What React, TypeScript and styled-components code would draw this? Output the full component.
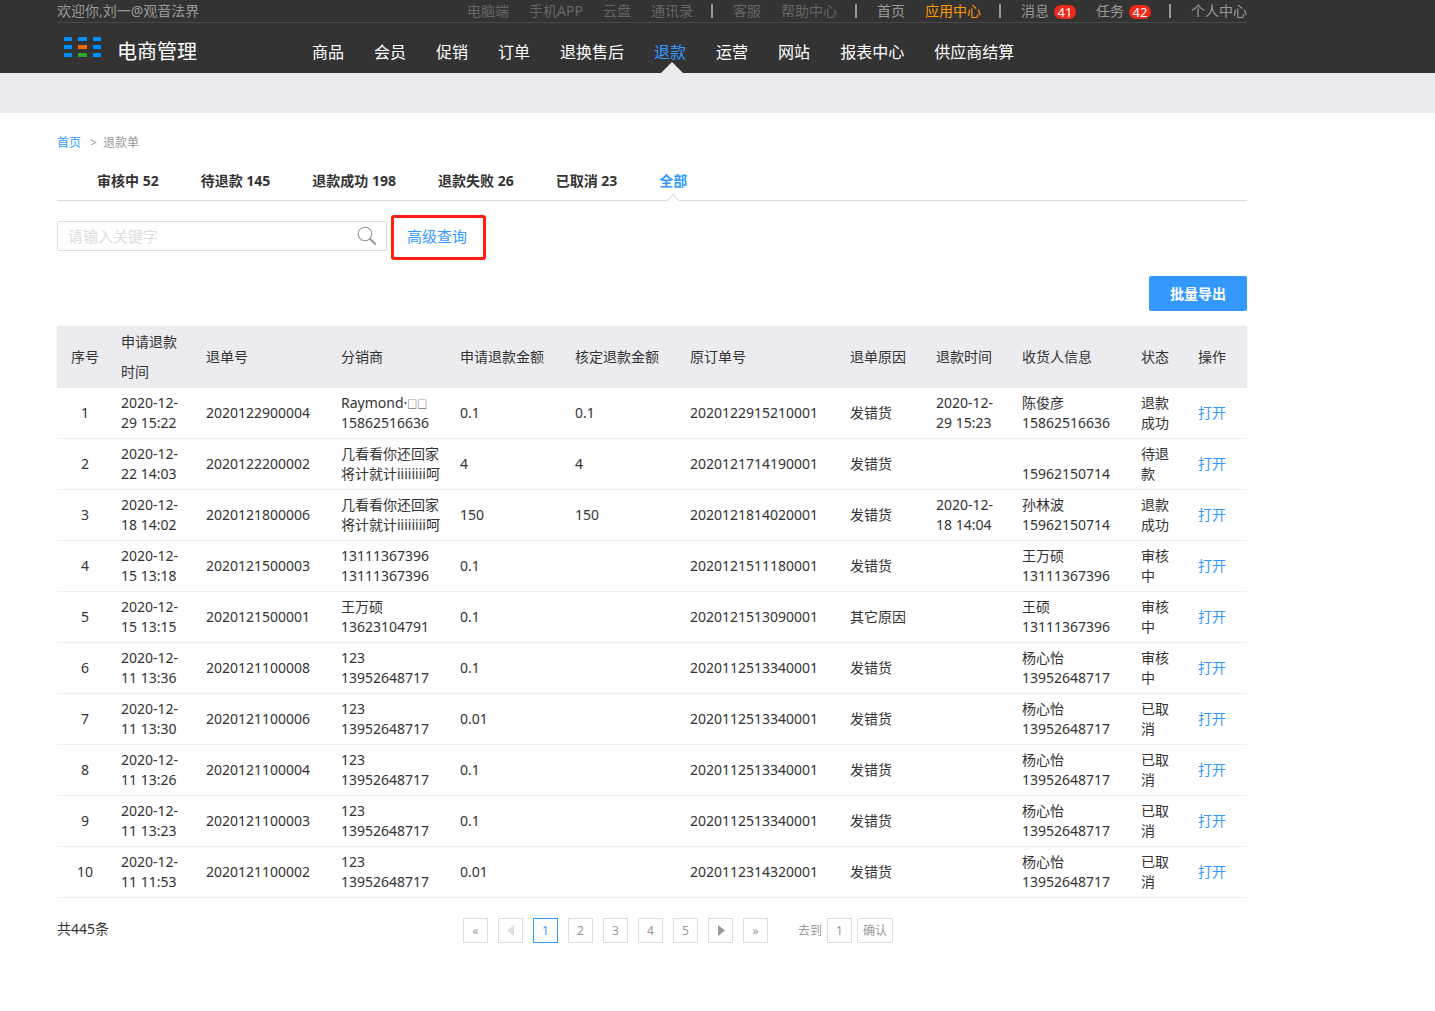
import React, { useState } from "react";
import styled, { createGlobalStyle, css } from "styled-components";

const GlobalStyle = createGlobalStyle`
  * { box-sizing: border-box; }
  body {
    margin: 0;
    background: #fff;
    color: #333;
    font: 14px/20px "Noto Sans", "Noto Sans CJK SC", sans-serif;
  }
  button, input { font: inherit; }
  a { text-decoration: none; color: inherit; }
`;

const BLUE = "#3399ff";

const Container = styled.div`
  max-width: 1304px;
  padding: 0 57px;
`;

const Header = styled.header`
  background: #333;
`;

const TopBar = styled.div`
  display: flex;
  justify-content: space-between;
  height: 23px;
  line-height: 22px;
  border-bottom: 1px solid #484848;
  color: #999;
  white-space: nowrap;
`;

const TopLinks = styled.nav`
  display: flex;
  align-items: center;
`;

type Tone = "dim" | "normal" | "accent";
const toneColor: Record<Tone, string> = { dim: "#666", normal: "#999", accent: "#ff9900" };

const TopLink = styled.a<{ $tone: Tone }>`
  display: flex;
  align-items: center;
  gap: 5px;
  margin-left: 20px;
  color: ${(p) => toneColor[p.$tone]};
`;

const Divider = styled.span`
  width: 2px;
  height: 14px;
  margin-left: 18px;
  background: #999;
`;

const Badge = styled.span`
  width: 22px;
  height: 14px;
  margin-top: 2px;
  border-radius: 7px;
  background: #f0281a;
  color: #fff;
  font-size: 13px;
  line-height: 14px;
  text-align: center;
`;

const MainBar = styled.div`
  display: flex;
  height: 50px;
  white-space: nowrap;
`;

const Brand = styled.a`
  display: flex;
  align-items: flex-start;
  width: 255px;
  padding: 14px 0 0 7px;
  gap: 15px;
  color: #fff;
  font-size: 20px;
  line-height: 30px;
`;

const MainNav = styled.nav`
  display: flex;
  gap: 30px;
`;

const MainLink = styled.a<{ $active: boolean }>`
  position: relative;
  color: ${(p) => (p.$active ? BLUE : "#fff")};
  font-size: 16px;
  line-height: 59px;
  ${(p) =>
    p.$active &&
    css`
      &::after {
        content: "";
        position: absolute;
        left: 50%;
        top: 39px;
        margin-left: -9px;
        border: 11px solid transparent;
        border-top: 0;
        border-bottom-color: #ecebf0;
      }
    `}
`;

const SubBand = styled.div`
  height: 40px;
  background: #ecebf0;
`;

const Breadcrumb = styled.nav`
  display: flex;
  gap: 9px;
  padding-top: 20px;
  color: #999;
  font-size: 12px;
  a { color: ${BLUE}; }
  span { display: flex; gap: 6px; }
`;

const Tabs = styled.div`
  display: flex;
  gap: 42px;
  height: 48px;
  padding: 0 40px;
  border-bottom: 1px solid #ddd;
`;

const Tab = styled.button<{ $active: boolean }>`
  position: relative;
  padding: 8px 0 0;
  border: 0;
  background: none;
  color: ${(p) => (p.$active ? BLUE : "#333")};
  font-weight: 700;
  line-height: 18px;
  white-space: nowrap;
  cursor: pointer;
  ${(p) =>
    p.$active &&
    css`
      &::after {
        content: "";
        position: absolute;
        left: 50%;
        bottom: -6px;
        width: 9px;
        height: 9px;
        margin-left: -5px;
        border: 1px solid #ddd;
        border-width: 1px 0 0 1px;
        background: #fff;
        transform: rotate(45deg);
      }
    `}
`;

const SearchRow = styled.form`
  display: flex;
  align-items: flex-start;
  gap: 4px;
  padding-top: 14px;
`;

const SearchBox = styled.div`
  display: flex;
  align-items: center;
  width: 330px;
  height: 30px;
  margin-top: 6px;
  padding: 0 8px 0 10px;
  border: 1px solid #ddd;
  border-radius: 2px;
`;

const SearchInput = styled.input`
  flex: 1;
  min-width: 0;
  padding: 0;
  border: 0;
  outline: 0;
  background: none;
  color: #333;
  font-size: 15px;
  &::placeholder { color: #ddd; opacity: 1; }
`;

const IconButton = styled.button`
  display: flex;
  padding: 0;
  border: 0;
  background: none;
  cursor: pointer;
`;

const AdvancedButton = styled.button`
  width: 95px;
  height: 45px;
  padding: 0 3px 3px 0;
  border: 3px solid #ff1f12;
  border-radius: 3px;
  background: #fff;
  color: ${BLUE};
  font-size: 15px;
  cursor: pointer;
`;

const Actions = styled.div`
  display: flex;
  justify-content: flex-end;
  padding: 16px 0 15px;
`;

const ExportButton = styled.button`
  width: 98px;
  height: 35px;
  padding: 0;
  border: 0;
  border-radius: 2px;
  background: ${BLUE};
  color: #fff;
  font-weight: 700;
  cursor: pointer;
`;

const Table = styled.table`
  width: 100%;
  table-layout: fixed;
  border-collapse: separate;
  border-spacing: 0;
`;

const HeadCell = styled.th<{ $center?: boolean }>`
  height: 62px;
  padding: 0 8px;
  background: #ecebf0;
  font-weight: 400;
  line-height: 30px;
  text-align: ${(p) => (p.$center ? "center" : "left")};
`;

const Cell = styled.td<{ $center?: boolean }>`
  height: 51px;
  padding: 5px 8px;
  border-bottom: 1px solid #eee;
  text-align: ${(p) => (p.$center ? "center" : "left")};
`;

const Line = styled.div`
  height: 20px;
  white-space: nowrap;
`;

const Symbols = styled.span`
  font-size: 10px;
`;

const OpenLink = styled.a`
  color: ${BLUE};
`;

const Footer = styled.footer`
  display: grid;
  grid-template-columns: 406px 1fr;
  padding: 20px 0 67px;
`;

const Total = styled.span`
  line-height: 22px;
`;

const Pager = styled.div`
  display: flex;
  align-items: center;
  gap: 10px;
  color: #999;
  font-size: 12px;
`;

const PageButton = styled.button<{ $active?: boolean }>`
  display: flex;
  align-items: center;
  justify-content: center;
  width: 25px;
  height: 25px;
  padding: 0;
  border: 1px solid ${(p) => (p.$active ? BLUE : "#ddd")};
  background: #fff;
  color: ${(p) => (p.$active ? BLUE : "#999")};
  cursor: pointer;
`;

const JumpForm = styled.form`
  display: flex;
  align-items: center;
  gap: 5px;
  margin-left: 20px;
`;

const JumpInput = styled.input`
  width: 25px;
  height: 25px;
  padding: 0;
  border: 1px solid #ddd;
  color: #999;
  text-align: center;
`;

const JumpButton = styled.button`
  width: 36px;
  height: 25px;
  padding: 0;
  border: 1px solid #ddd;
  border-radius: 2px;
  background: #fff;
  color: #999;
  cursor: pointer;
`;

type TopItem = { label?: string; tone?: Tone; badge?: number };
const topItems: TopItem[] = [
  { label: "电脑端", tone: "dim" },
  { label: "手机APP", tone: "dim" },
  { label: "云盘", tone: "dim" },
  { label: "通讯录", tone: "dim" },
  {},
  { label: "客服", tone: "dim" },
  { label: "帮助中心", tone: "dim" },
  {},
  { label: "首页" },
  { label: "应用中心", tone: "accent" },
  {},
  { label: "消息", badge: 41 },
  { label: "任务", badge: 42 },
  {},
  { label: "个人中心" },
];

const navItems = ["商品", "会员", "促销", "订单", "退换售后", "退款", "运营", "网站", "报表中心", "供应商结算"];
const tabs = ["审核中 52", "待退款 145", "退款成功 198", "退款失败 26", "已取消 23", "全部"];

const columns: [string, number][] = [
  ["序号", 56],
  ["申请退款时间", 85],
  ["退单号", 135],
  ["分销商", 119],
  ["申请退款金额", 115],
  ["核定退款金额", 115],
  ["原订单号", 160],
  ["退单原因", 86],
  ["退款时间", 86],
  ["收货人信息", 119],
  ["状态", 57],
  ["操作", 57],
];

type Refund = {
  applied: string;
  no: string;
  dealer: [React.ReactNode, string];
  amount: string;
  approved: string;
  order: string;
  reason: string;
  refunded: string;
  receiver: [string, string];
  status: string;
};

const refund = (
  applied: string,
  no: string,
  dealer: [React.ReactNode, string],
  amount: string,
  approved: string,
  order: string,
  reason: string,
  refunded: string,
  receiver: [string, string],
  status: string
): Refund => ({ applied, no, dealer, amount, approved, order, reason, refunded, receiver, status });

const raymond = (
  <>
    Raymond·<Symbols>□□</Symbols>
  </>
);

const rows: Refund[] = [
  refund("2020-12-29 15:22", "2020122900004", [raymond, "15862516636"], "0.1", "0.1", "2020122915210001", "发错货", "2020-12-29 15:23", ["陈俊彦", "15862516636"], "退款成功"),
  refund("2020-12-22 14:03", "2020122200002", ["几看看你还回家", "将计就计iiiiiiii呵"], "4", "4", "2020121714190001", "发错货", "", ["", "15962150714"], "待退款"),
  refund("2020-12-18 14:02", "2020121800006", ["几看看你还回家", "将计就计iiiiiiii呵"], "150", "150", "2020121814020001", "发错货", "2020-12-18 14:04", ["孙林波", "15962150714"], "退款成功"),
  refund("2020-12-15 13:18", "2020121500003", ["13111367396", "13111367396"], "0.1", "", "2020121511180001", "发错货", "", ["王万硕", "13111367396"], "审核中"),
  refund("2020-12-15 13:15", "2020121500001", ["王万硕", "13623104791"], "0.1", "", "2020121513090001", "其它原因", "", ["王硕", "13111367396"], "审核中"),
  refund("2020-12-11 13:36", "2020121100008", ["123", "13952648717"], "0.1", "", "2020112513340001", "发错货", "", ["杨心怡", "13952648717"], "审核中"),
  refund("2020-12-11 13:30", "2020121100006", ["123", "13952648717"], "0.01", "", "2020112513340001", "发错货", "", ["杨心怡", "13952648717"], "已取消"),
  refund("2020-12-11 13:26", "2020121100004", ["123", "13952648717"], "0.1", "", "2020112513340001", "发错货", "", ["杨心怡", "13952648717"], "已取消"),
  refund("2020-12-11 13:23", "2020121100003", ["123", "13952648717"], "0.1", "", "2020112513340001", "发错货", "", ["杨心怡", "13952648717"], "已取消"),
  refund("2020-12-11 11:53", "2020121100002", ["123", "13952648717"], "0.01", "", "2020112314320001", "发错货", "", ["杨心怡", "13952648717"], "已取消"),
];

function Logo() {
  const fills = ["#0090ff", "#0090ff", "#0090ff", "#0090ff", "#ff6a00", "#0090ff", "#0090ff", "#2aa82f", "#0090ff"];
  const xs = [0, 14, 29];
  return (
    <svg width="38" height="20" viewBox="0 0 38 20" aria-hidden="true">
      {fills.map((fill, i) => (
        <rect key={i} x={xs[i % 3]} y={Math.floor(i / 3) * 8} width={i % 3 === 1 ? 9 : 8} height="4" rx="0.6" fill={fill} />
      ))}
    </svg>
  );
}

function SearchIcon() {
  return (
    <svg width="22" height="22" viewBox="0 0 22 22" fill="none" stroke="#999" strokeLinecap="round" aria-hidden="true">
      <circle cx="9" cy="9" r="6.8" strokeWidth="1.1" />
      <path d="M14 14 L19.3 19" strokeWidth="2" />
    </svg>
  );
}

function Arrow({ left }: { left?: boolean }) {
  return (
    <svg width="8" height="12" viewBox="0 0 8 12" aria-hidden="true">
      <path d={left ? "M7 0 L0 5.5 L7 11 Z" : "M1 0 L8 5.5 L1 11 Z"} fill={left ? "#ddd" : "#999"} />
    </svg>
  );
}

export default function App() {
  const [tab, setTab] = useState(5);
  const [page, setPage] = useState(1);
  const stop = (e: React.FormEvent) => e.preventDefault();

  return (
    <>
      <GlobalStyle />
      <Header>
        <Container>
          <TopBar>
            <span>欢迎你,刘一@观音法界</span>
            <TopLinks aria-label="站点">
              {topItems.map((item, i) =>
                item.label ? (
                  <TopLink key={i} href="#" $tone={item.tone ?? "normal"}>
                    {item.label}
                    {item.badge && <Badge>{item.badge}</Badge>}
                  </TopLink>
                ) : (
                  <Divider key={i} />
                )
              )}
            </TopLinks>
          </TopBar>
          <MainBar>
            <Brand href="#">
              <Logo />
              电商管理
            </Brand>
            <MainNav aria-label="主导航">
              {navItems.map((label) => (
                <MainLink key={label} href="#" $active={label === "退款"}>
                  {label}
                </MainLink>
              ))}
            </MainNav>
          </MainBar>
        </Container>
      </Header>
      <SubBand />
      <Container as="main">
        <Breadcrumb aria-label="面包屑">
          <a href="#">首页</a>
          <span>
            <span>&gt;</span>退款单
          </span>
        </Breadcrumb>
        <Tabs role="tablist">
          {tabs.map((label, i) => (
            <Tab key={label} type="button" role="tab" aria-selected={tab === i} $active={tab === i} onClick={() => setTab(i)}>
              {label}
            </Tab>
          ))}
        </Tabs>
        <SearchRow onSubmit={stop}>
          <SearchBox>
            <SearchInput type="text" aria-label="关键字" placeholder="请输入关键字" />
            <IconButton type="submit" aria-label="搜索">
              <SearchIcon />
            </IconButton>
          </SearchBox>
          <AdvancedButton type="button">高级查询</AdvancedButton>
        </SearchRow>
        <Actions>
          <ExportButton type="button">批量导出</ExportButton>
        </Actions>
        <Table>
          <colgroup>
            {columns.map(([label, width]) => (
              <col key={label} width={width} />
            ))}
          </colgroup>
          <thead>
            <tr>
              {columns.map(([label], i) => (
                <HeadCell key={label} scope="col" $center={i === 0}>
                  {label}
                </HeadCell>
              ))}
            </tr>
          </thead>
          <tbody>
            {rows.map((row, i) => (
              <tr key={row.no}>
                <Cell $center>{i + 1}</Cell>
                <Cell>{row.applied}</Cell>
                <Cell>{row.no}</Cell>
                <Cell>
                  <Line>{row.dealer[0]}</Line>
                  <Line>{row.dealer[1]}</Line>
                </Cell>
                <Cell>{row.amount}</Cell>
                <Cell>{row.approved}</Cell>
                <Cell>{row.order}</Cell>
                <Cell>{row.reason}</Cell>
                <Cell>{row.refunded}</Cell>
                <Cell>
                  <Line>{row.receiver[0]}</Line>
                  <Line>{row.receiver[1]}</Line>
                </Cell>
                <Cell>{row.status}</Cell>
                <Cell>
                  <OpenLink href="#">打开</OpenLink>
                </Cell>
              </tr>
            ))}
          </tbody>
        </Table>
        <Footer>
          <Total>共445条</Total>
          <Pager>
            <PageButton type="button" aria-label="第一页" onClick={() => setPage(1)}>«</PageButton>
            <PageButton type="button" aria-label="上一页" onClick={() => setPage(Math.max(1, page - 1))}>
              <Arrow left />
            </PageButton>
            {[1, 2, 3, 4, 5].map((n) => (
              <PageButton key={n} type="button" $active={n === page} onClick={() => setPage(n)}>
                {n}
              </PageButton>
            ))}
            <PageButton type="button" aria-label="下一页" onClick={() => setPage(Math.min(5, page + 1))}>
              <Arrow />
            </PageButton>
            <PageButton type="button" aria-label="最后一页" onClick={() => setPage(5)}>»</PageButton>
            <JumpForm onSubmit={stop}>
              <label htmlFor="jump">去到</label>
              <JumpInput id="jump" type="text" defaultValue="1" />
              <JumpButton type="submit">确认</JumpButton>
            </JumpForm>
          </Pager>
        </Footer>
      </Container>
    </>
  );
}
